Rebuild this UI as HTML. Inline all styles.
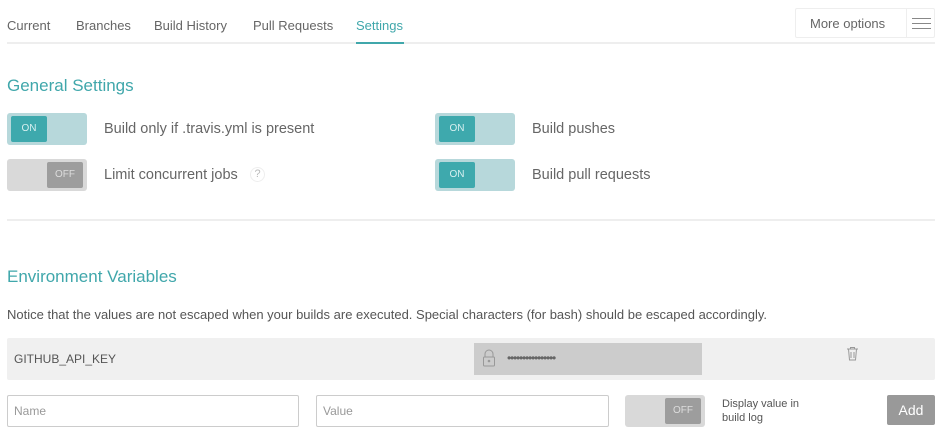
<!DOCTYPE html>
<html><head><style>
*{box-sizing:border-box;margin:0;padding:0}
body{width:945px;height:438px;background:#fff;font-family:"Liberation Sans",sans-serif;color:#666;position:relative;overflow:hidden}
.a{position:absolute}
.tab{position:absolute;top:18px;font-size:13px;color:#666}
.h{font-size:17px;color:#40a7ab}
.tg{position:absolute;width:80px;height:32px;border-radius:3px}
.on{background:#b7d8db}
.off{background:#d9d9d9}
.kn{position:absolute;top:3px;width:36px;height:26px;border-radius:2px;font-size:10px;color:#fff;text-align:center;line-height:26px}
.on .kn{left:4px;background:#3ea9ad;color:#d8f0f0}
.off .kn{right:4px;background:#9d9d9d;color:#ddd}
.lb{position:absolute;font-size:14.5px;color:#666}
.inp{position:absolute;top:395px;height:32px;border:1px solid #ccc;border-radius:2px;font-size:12px;color:#999;padding:8px 6px}
</style></head><body>
<div class="tab" style="left:7px">Current</div>
<div class="tab" style="left:76px">Branches</div>
<div class="tab" style="left:154px">Build History</div>
<div class="tab" style="left:253px">Pull Requests</div>
<div class="tab" style="left:356px;color:#40a7ab">Settings</div>
<div class="a" style="left:7px;top:42px;width:928px;height:2px;background:#eee"></div>
<div class="a" style="left:356px;top:42px;width:48px;height:2px;background:#40a7ab"></div>
<div class="a" style="left:795px;top:8px;width:140px;height:30px;border:1px solid #eee;border-radius:2px"></div>
<div class="a" style="left:810px;top:16px;font-size:13px;color:#666">More options</div>
<div class="a" style="left:906px;top:9px;width:1px;height:28px;background:#eee"></div>
<div class="a" style="left:912px;top:18px;width:19px;height:1px;background:#888;box-shadow:0 5px 0 #888,0 10px 0 #888"></div>

<div class="a h" style="left:7px;top:76px">General Settings</div>
<div class="tg on" style="left:7px;top:113px"><div class="kn">ON</div></div>
<div class="lb" style="left:104px;top:121px">Build only if .travis.yml is present</div>
<div class="tg off" style="left:7px;top:159px"><div class="kn">OFF</div></div>
<div class="lb" style="left:104px;top:167px">Limit concurrent jobs</div>
<div class="a" style="left:250px;top:167px;width:15px;height:15px;border:1px solid #eee;border-radius:50%;font-size:11px;color:#bbb;text-align:center;line-height:13px">?</div>
<div class="tg on" style="left:435px;top:113px"><div class="kn">ON</div></div>
<div class="lb" style="left:532px;top:121px">Build pushes</div>
<div class="tg on" style="left:435px;top:159px"><div class="kn">ON</div></div>
<div class="lb" style="left:532px;top:167px">Build pull requests</div>
<div class="a" style="left:7px;top:219px;width:928px;height:2px;background:#eee"></div>

<div class="a h" style="left:7px;top:267px">Environment Variables</div>
<div class="a" style="left:7px;top:307px;font-size:13px;color:#555">Notice that the values are not escaped when your builds are executed. Special characters (for bash) should be escaped accordingly.</div>
<div class="a" style="left:7px;top:338px;width:928px;height:42px;background:#f0f0f0;border-radius:2px"></div>
<div class="a" style="left:14px;top:352px;font-size:12px;color:#555">GITHUB_API_KEY</div>
<div class="a" style="left:474px;top:343px;width:228px;height:32px;background:#ccc"></div>
<svg class="a" style="left:482px;top:349px" width="14" height="19" viewBox="0 0 14 19"><path d="M3 8V5a4 4 0 0 1 8 0v3" fill="none" stroke="#999"/><rect x="1.5" y="8" width="11" height="9" rx="1" fill="none" stroke="#999"/><circle cx="7" cy="12" r="1.3" fill="#999"/></svg>
<div class="a" style="left:507px;top:351px;font-size:12px;color:#666;letter-spacing:-1.2px;line-height:14px">••••••••••••••••</div>
<svg class="a" style="left:846px;top:346px" width="13" height="16" viewBox="0 0 13 16"><path d="M1 3h11M4.5 3V1.5h4V3M2.5 3l1 11h6l1-11M5 6v6M8 6v6" fill="none" stroke="#999"/></svg>
<div class="inp" style="left:7px;width:292px">Name</div>
<div class="inp" style="left:316px;width:293px">Value</div>
<div class="tg off" style="left:625px;top:395px"><div class="kn">OFF</div></div>
<div class="a" style="left:722px;top:397px;font-size:11px;color:#555;line-height:14px">Display value in<br>build log</div>
<div class="a" style="left:887px;top:395px;width:48px;height:30px;background:#999;border-radius:2px;color:#fff;font-size:14px;text-align:center;line-height:30px">Add</div>
</body></html>
